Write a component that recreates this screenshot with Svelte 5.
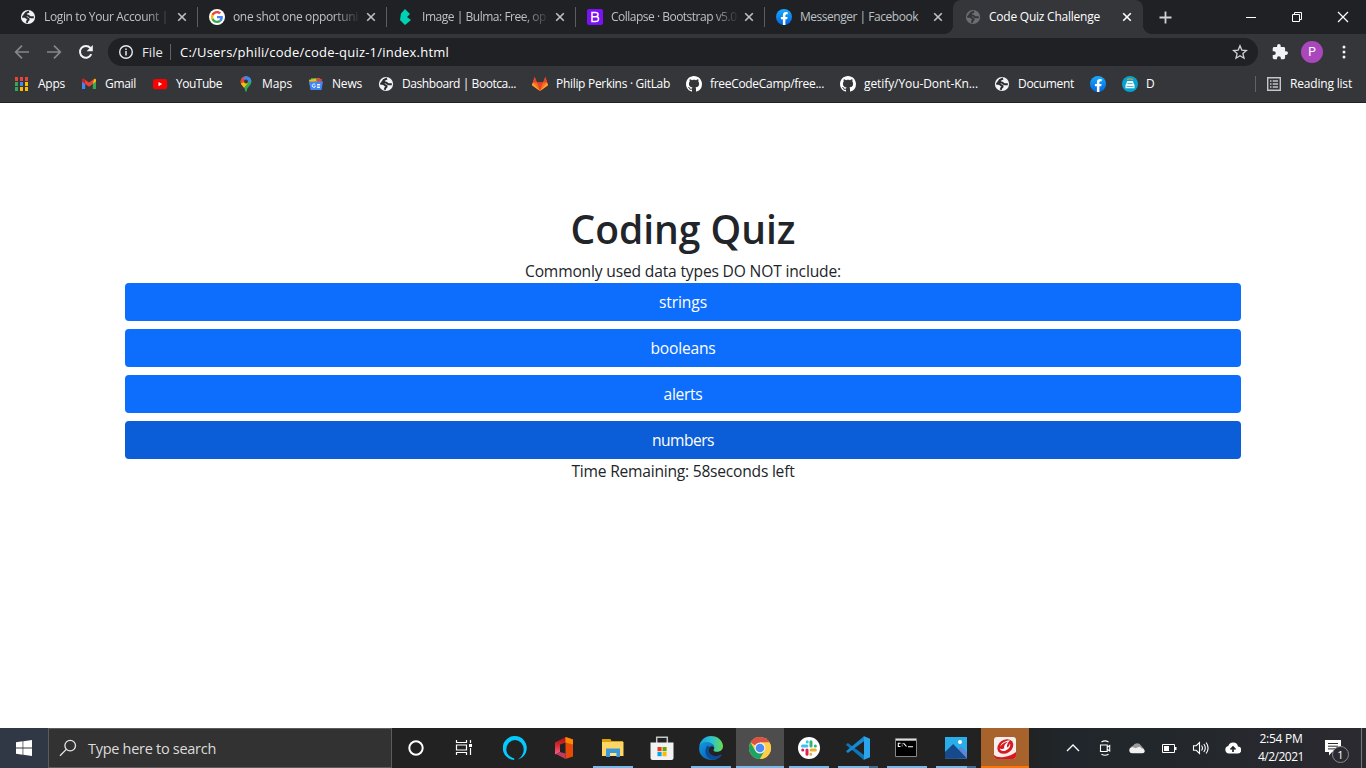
<script>
  const tabs = [
    { icon: 'globe', title: 'Login to Your Account |', w: 124 },
    { icon: 'google', title: 'one shot one opportuni', w: 125 },
    { icon: 'bulma', title: 'Image | Bulma: Free, op', w: 124 },
    { icon: 'bootstrap', title: 'Collapse · Bootstrap v5.0', w: 125.5 },
    { icon: 'facebook', title: 'Messenger | Facebook', w: 118 },
    { icon: 'globe', title: 'Code Quiz Challenge', w: 111, active: true }
  ];
  const bookmarks = [
    { icon: 'apps', label: 'Apps', w: 27 },
    { icon: 'gmail', label: 'Gmail', w: 31 },
    { icon: 'youtube', label: 'YouTube', w: 46 },
    { icon: 'maps', label: 'Maps', w: 30 },
    { icon: 'news', label: 'News', w: 30 },
    { icon: 'globe', label: 'Dashboard | Bootca...', w: 114 },
    { icon: 'gitlab', label: 'Philip Perkins · GitLab', w: 114 },
    { icon: 'github', label: 'freeCodeCamp/free...', w: 114 },
    { icon: 'github', label: 'getify/You-Dont-Kn...', w: 114 },
    { icon: 'globe', label: 'Document', w: 56 },
    { icon: 'facebook', label: '', w: 0 },
    { icon: 'car', label: 'D', w: 9 }
  ];
  const answers = [
    { label: 'strings', w: 48 },
    { label: 'booleans', w: 65 },
    { label: 'alerts', w: 39 },
    { label: 'numbers', w: 62, hover: true }
  ];
  const apps = [
    { icon: 'cortana' }, { icon: 'taskview' }, { icon: 'alexa' }, { icon: 'office' },
    { icon: 'explorer', run: true }, { icon: 'store' }, { icon: 'edge', run: true },
    { icon: 'chrome', run: true, focus: true }, { icon: 'slack', run: true },
    { icon: 'vscode', run: true, multi: true }, { icon: 'cmd', run: true },
    { icon: 'photos', run: true, multi: true }, { icon: 'trend', alert: true }
  ];

  // Tracks a line of text so that it fills the given width.
  function fit(node, w) {
    if (!w) return;
    node.style.letterSpacing = '0px';
    const natural = node.getBoundingClientRect().width;
    node.style.letterSpacing = (w - natural) / node.textContent.length + 'px';
  }
</script>

{#snippet cross(color)}
  <svg width="10" height="10" viewBox="0 0 10 10"><path d="M1.200 1.200l7.600 7.600M8.800 1.200L1.200 8.800" stroke={color} stroke-width="1.600" /></svg>
{/snippet}

{#snippet fav(name, dim)}
  {#if name === 'globe'}
    <svg width="16" height="16" viewBox="0 0 16 16">
      <circle cx="8" cy="8" r="7.100" fill={dim ? '#6b6e72' : '#f1f3f4'} />
      <g fill="none" stroke={dim ? '#35363a' : '#2b2c2f'} stroke-width="2"><path d="M9 2.500L5.800 4.200q-.2 2.200 1.800 2.400c1.700 0 1.500 1.700 3.300 1.700h2.900" /><path d="M2.200 7.800h2.300c2 0 1.500 1.400 3.200 1.700 1.500.3.900 1.800-.2 2.100l-.8 2.200" /></g>
      <path d="M2.600 7.800Q3.200 4.600 6 3.200l1 4.300z" fill={dim ? '#35363a' : '#2b2c2f'} />
    </svg>
  {:else if name === 'google'}
    <svg width="16" height="16" viewBox="0 0 16 16">
      <circle cx="8" cy="8" r="8" fill="#fff" />
      <g transform="translate(1.900 1.900) scale(.254)">
        <path fill="#EA4335" d="M24 9.500c3.540 0 6.710 1.220 9.210 3.600l6.850-6.850C35.900 2.380 30.470 0 24 0 14.620 0 6.510 5.380 2.560 13.220l7.980 6.190C12.430 13.720 17.740 9.500 24 9.500z" />
        <path fill="#4285F4" d="M46.980 24.550c0-1.570-.15-3.090-.38-4.550H24v9.020h12.940c-.58 2.960-2.260 5.480-4.780 7.180l7.730 6c4.510-4.180 7.090-10.360 7.090-17.650z" />
        <path fill="#FBBC05" d="M10.530 28.590c-.48-1.450-.76-2.990-.76-4.590s.27-3.140.76-4.590l-7.980-6.190C.92 16.460 0 20.120 0 24c0 3.880.92 7.540 2.560 10.780l7.970-6.190z" />
        <path fill="#34A853" d="M24 48c6.480 0 11.930-2.130 15.890-5.810l-7.730-6c-2.150 1.450-4.920 2.300-8.160 2.300-6.260 0-11.570-4.220-13.470-9.910l-7.980 6.190C6.510 42.620 14.620 48 24 48z" />
      </g>
    </svg>
  {:else if name === 'bulma'}
    <svg width="16" height="16" viewBox="0 0 16 16"><path d="M2 11L3 4.500 7 0l5 5-3 3 4 3-6 5z" fill="#00d1b2" /></svg>
  {:else if name === 'bootstrap'}
    <svg width="16" height="16" viewBox="0 0 16 16">
      <rect width="16" height="16" rx="2" fill="#7a12f5" />
      <path d="M5 3.500h3.600c3.200 0 3.100 3.600.5 4.100 3.500.5 3.100 4.900-.5 4.900H5zM5 7.700h4" fill="none" stroke="#fff" stroke-width="1.500" />
    </svg>
  {:else if name === 'facebook'}
    <svg width="16" height="16" viewBox="0 0 16 16">
      <defs><linearGradient id="fb" x2="0" y2="1"><stop stop-color="#18acfe" /><stop offset="1" stop-color="#0163e0" /></linearGradient></defs>
      <circle cx="8" cy="8" r="8" fill="url(#fb)" />
      <path d="M6.900 15.900v-5.600h-2V8h2V6.300c0-2 1.200-3.200 3.100-3.200.9 0 1.700.2 1.700.2v1.900h-1c-1 0-1.300.6-1.300 1.300V8h2.200l-.4 2.300H9.400v5.600z" fill="#fff" />
    </svg>
  {:else if name === 'apps'}
    <svg width="16" height="16" viewBox="0 0 16 16">
      {#each ['#ea4335', '#ea4335', '#ea4335', '#34a853', '#4285f4', '#fbbc05', '#34a853', '#fbbc05', '#fbbc05'] as c, i}
        <rect x={2 + (i % 3) * 5} y={1 + Math.floor(i / 3) * 5} width="3" height="4" fill={c} />
      {/each}
    </svg>
  {:else if name === 'gmail'}
    <svg width="16" height="16" viewBox="0 0 16 16">
      <path d="M1 4v9h3.200V6z" fill="#4285f4" /><path d="M15 4v9h-3.200V6z" fill="#34a853" />
      <path d="M11.800 4.800L13.200 3c1-.8 1.800 0 1.800.9v1.500l-3.200 2.600z" fill="#fbbc04" />
      <path d="M1 5.400V3.900C1 3 2 2.200 2.900 2.900L8 6.600l5.100-3.700-1.300 5.100L8 10.800z" fill="#ea4335" />
      <path d="M1 5.400V4c0-1 .9-1.500 1.600-1.200L4.200 4v4z" fill="#c5221f" />
    </svg>
  {:else if name === 'youtube'}
    <svg width="16" height="16" viewBox="0 0 16 16"><rect x="1" y="3" width="14.200" height="10.300" rx="2.400" fill="#f00" /><path d="M6.500 6v4.200L10.200 8z" fill="#fff" /></svg>
  {:else if name === 'maps'}
    <svg width="16" height="16" viewBox="0 0 16 16">
      <defs><clipPath id="pin"><path d="M8 .2a5.400 5.400 0 0 0-5.400 5.500C2.600 9.500 7 10.500 7.200 15q.8 1.400 1.600 0C9 10.500 13.400 9.500 13.400 5.700A5.400 5.400 0 0 0 8 .2z" /></clipPath></defs>
      <g clip-path="url(#pin)"><path d="M0 0h16v16H0z" fill="#34a853" /><path d="M0 0h9L8 6 3 12H0z" fill="#ea4335" /><path d="M7 0h9v5l-4 1-4-1-3-3z" fill="#4285f4" /><path d="M2 8l6-3 2 2-6 7z" fill="#fbbc04" /></g>
      <circle cx="8" cy="5.500" r="2" fill="#35363a" />
    </svg>
  {:else if name === 'news'}
    <svg width="16" height="16" viewBox="0 0 16 16">
      <path d="M3 2h9v8H3z" fill="#34a853" /><path d="M9 1.800l5 1.500-1 6H8z" fill="#ea4335" /><path d="M1 3.800l7-1 1 6-7 1z" fill="#fbbc04" />
      <path d="M1 5.500h14L13.500 14h-11z" fill="#4285f4" />
      <path d="M7.300 8.700a1.700 1.700 0 1 0 .2 1.500H6.200M9 8.500h3.200M9 10h2.800M9 11.500h3" stroke="#fff" fill="none" stroke-width=".9" />
    </svg>
  {:else if name === 'gitlab'}
    <svg width="16" height="16" viewBox="0 0 16 16">
      <path d="M8 15L0 9.200 2.600 1l2.300 5.500h6.200L13.400 1 16 9.200z" fill="#fc6d26" /><path d="M2.600 1l2.300 5.500H.9zM13.400 1l-2.300 5.500h4z" fill="#e24329" /><path d="M8 15L4.900 6.500h6.200z" fill="#e24329" /><path d="M.9 6.500L8 15 0 9.200zM15.100 6.500L8 15l8-5.800z" fill="#fca326" />
    </svg>
  {:else if name === 'github'}
    <svg width="16" height="16" viewBox="0 0 16 16"><path fill="#fff" d="M8 0C3.580 0 0 3.580 0 8c0 3.540 2.290 6.530 5.470 7.590.4.07.55-.17.55-.38 0-.19-.01-.82-.01-1.490-2.010.37-2.530-.49-2.690-.94-.09-.23-.48-.94-.82-1.130-.28-.15-.68-.52-.01-.53.63-.01 1.080.58 1.230.82.72 1.210 1.870.87 2.330.66.07-.52.28-.87.51-1.070-1.780-.2-3.640-.89-3.640-3.950 0-.87.31-1.590.82-2.150-.08-.2-.36-1.020.08-2.120 0 0 .67-.21 2.200.82.64-.18 1.320-.27 2-.27s1.360.09 2 .27c1.530-1.040 2.200-.82 2.200-.82.44 1.100.16 1.920.08 2.120.51.56.82 1.270.82 2.150 0 3.070-1.870 3.750-3.650 3.950.29.25.54.73.54 1.480 0 1.070-.01 1.930-.01 2.200 0 .21.15.46.55.38A8.010 8.010 0 0 0 16 8c0-4.420-3.580-8-8-8z" /></svg>
  {:else if name === 'car'}
    <svg width="16" height="16" viewBox="0 0 16 16"><circle cx="8" cy="8" r="8" fill="#04a3cf" /><path d="M5 3.400q3-1 6 0" stroke="#c9a545" stroke-width="1.100" fill="none" /><path d="M5 5h6l.8 3 .7.700v3.600h-9V8.700l.7-.7z" fill="#fff" /><path d="M5.500 7.600h5M4.500 10.400h7" stroke="#04a3cf" stroke-width=".8" /></svg>
  {/if}
{/snippet}

{#snippet app(name)}
  {#if name === 'cortana'}
    <svg width="24" height="24" viewBox="0 0 24 24"><circle cx="12" cy="12" r="6.700" fill="none" stroke="#fff" stroke-width="2" /></svg>
  {:else if name === 'taskview'}
    <svg width="24" height="24" viewBox="0 0 24 24" fill="none" stroke="#fff" stroke-width="1.200"><path d="M3.500 4v2.500h10V4M3.500 19v-2.500h10V19M3.500 9h10v5h-10zM17.500 4v3M17.500 12v7" /><path d="M16 8h3v3h-3z" fill="#fff" stroke="none" /></svg>
  {:else if name === 'alexa'}
    <svg width="24" height="24" viewBox="0 0 24 24"><path d="M11.200 24A12 12 0 1 1 14 23.800c3.500-1.300 6.700-5.500 6.700-10.300a8.700 9.500 0 1 0-17.400 0c0 4 3 8 7.900 8.700z" fill="#05caff" /></svg>
  {:else if name === 'office'}
    <svg width="24" height="24" viewBox="0 0 24 24">
      <defs><linearGradient id="off" x2="0" y2="1"><stop stop-color="#a80f12" /><stop offset=".5" stop-color="#d72c35" /><stop offset="1" stop-color="#ff6090" /></linearGradient></defs>
      <path d="M3 6.500L13.500 1v5.500L8 8.500V16l-5 2.500z" fill="url(#off)" /><path d="M13.500 1L21 3.500v17L13.500 23z" fill="#e64a08" /><path d="M13.500 1L21 3.500v5l-7.500-2z" fill="#ff8a00" /><path d="M4 18l4-2 5.500 1.500V23z" fill="#c33a60" />
    </svg>
  {:else if name === 'explorer'}
    <svg width="24" height="24" viewBox="0 0 24 24"><path d="M1 3h8.500l1 2H22V20H1z" fill="#dba106" /><path d="M1 6h21.500v14H1z" fill="#ffd663" /><path d="M5 12.500h14V21h-3.700v-4H9v4H5z" fill="#3d98d8" /><path d="M9 17h6.300v3H9z" fill="#ffe28f" /></svg>
  {:else if name === 'store'}
    <svg width="24" height="24" viewBox="0 0 24 24"><path d="M6.700 7V1.300h10.600V7" fill="none" stroke="#c6c6c6" stroke-width="1.500" /><path d="M.5 6.500h23V22q0 2-2 2h-19q-2 0-2-2z" fill="#f2f2f2" /><path d="M7.500 11H11.600v4.200H7.500z" fill="#f03a17" /><path d="M12.500 11h4.100v4.200h-4.100z" fill="#6ba500" /><path d="M7.500 16h4.100v4.200H7.500z" fill="#00a4ef" /><path d="M12.500 16h4.100v4.200h-4.100z" fill="#ffb900" /></svg>
  {:else if name === 'edge'}
    <svg width="24" height="24" viewBox="0 0 24 24">
      <defs><linearGradient id="eg"><stop stop-color="#169fda" /><stop offset=".5" stop-color="#2cc0d5" /><stop offset="1" stop-color="#68dc4c" /></linearGradient><linearGradient id="eb" x2="1" y2="1"><stop stop-color="#1398e0" /><stop offset="1" stop-color="#0a51a3" /></linearGradient></defs>
      <path d="M.2 11C.8 4.500 6 0 12 0c7 0 12 5 12 10.300 0 3.300-2.700 5.500-5.700 5.500-2.700 0-4.200-1-3.800-1.800 1.800-2 .5-5.800-3.400-6.200C6 7 1.500 8 .2 11z" fill="url(#eg)" />
      <path d="M.2 11.800C.7 8.300 4 5.900 7.700 5.900c4.300 0 7.500 2.500 7.600 5.900-.8-1.600-3-2.100-4.500-.8-2.700 2.500-1.500 8.500 5.200 9.200 2.500.2 4.600-.7 5.800-1.400.7-.4 1 .2.600.7C19.700 23 16 24.200 12.200 24 5 23.700-.5 18.500.2 11.800z" fill="url(#eb)" />
      <path d="M8.500 9.500c-3.700 4.500-2.500 11.500 3.300 13.800 3.500 1.200 8-.1 10.300-4.200-2.600 1.300-5.400 1.500-7.600.6-4.500-1.700-6-5.400-3.700-8.700z" fill="#0c4a96" />
    </svg>
  {:else if name === 'chrome'}
    <svg width="24" height="24" viewBox="0 0 24 24">
      <circle cx="12" cy="12" r="11" fill="#ffcd46" /><path d="M12 12L2.470 6.500A11 11 0 0 1 21.530 6.500H12z" fill="#dd5144" /><path d="M2.470 6.500A11 11 0 0 0 12 23l4.800-8.300L12 12 7.200 14.600z" fill="#1da462" /><path d="M12 6.500h9.530A11 11 0 0 1 12 23l4.800-8.300z" fill="#ffcd46" />
      <circle cx="12" cy="12" r="5.500" fill="#f1f1f1" /><circle cx="12" cy="12" r="4.300" fill="#4c8bf5" />
    </svg>
  {:else if name === 'slack'}
    <svg width="24" height="24" viewBox="0 0 24 24"><circle cx="12" cy="12" r="11" fill="#fff" />
      <g stroke-width="3" stroke-linecap="round"><path d="M5.500 10h4.400M10.200 5.700v.2" stroke="#36c5f0" /><path d="M14 5.700v4.200M18.300 10h.1" stroke="#2eb67d" /><path d="M14 14h4.400M13.800 18.300v-.1" stroke="#ecb22e" /><path d="M10 14v4.300M5.700 14h.1" stroke="#e01e5a" /></g>
    </svg>
  {:else if name === 'vscode'}
    <svg width="24" height="24" viewBox="0 0 24 24"><path d="M.3 8.300l1.600-1.400 16.100 12v5L.5 9.300z" fill="#0a76bd" /><path d="M.3 15.700l1.600 1.400L18 5.200V.2L.5 14.700z" fill="#168bd2" /><path d="M17.500 0L24 2.800v18.400L17.500 24q.5-.5.500-1.500v-21q0-1-.5-1.500z" fill="#2ba4ec" /></svg>
  {:else if name === 'cmd'}
    <svg width="24" height="24" viewBox="0 0 24 24"><path d="M.500 2.500h21v18h-21z" fill="#000" stroke="#888" /><path d="M1 3h20v1.700H1z" fill="#ddd" /><path d="M5.500 7.200H3.300v3.300h2.200M7.200 7.500v.8M7.200 9.500v.8M8.500 7.200l3 3.300M13 10.800h5" stroke="#fff" fill="none" stroke-width="1.100" /></svg>
  {:else if name === 'photos'}
    <svg width="24" height="24" viewBox="0 0 24 24"><path d="M1 1h22v21.500H1z" fill="#2aaeea" /><path d="M14 14l3-3.500 6 6v6H14z" fill="#5e86d6" /><path d="M1 16l8.200-8L23 22.500H1z" fill="#174a8c" /><circle cx="16" cy="6" r="2" fill="#fff" /></svg>
  {:else if name === 'trend'}
    <svg width="24" height="24" viewBox="0 0 24 24"><rect x="1" y="1" width="22" height="22" rx="3" fill="#f4efec" /><path d="M1 19q3 3 10 2 7-1 12-5v4q0 3-3 3H4q-3 0-3-3z" fill="#d71920" /><ellipse cx="12.300" cy="10.500" rx="8.500" ry="6.700" transform="rotate(-35 12.300 10.500)" fill="#d71920" /><path d="M17 4.200c-5 .2-9.800 3.600-9.600 6.600 1-2.700 4.500-4.700 7.600-5.100-2.800 1.600-4.500 4.400-3.600 6.600-2 1-4.200.8-4.700-.4.2 2.700 3 3.800 6 2.500 3.300-1.500 5.300-4.500 4.300-7-.5 2-1.500 3.300-3 4.200-.4-2.500.8-5.300 3-7.400z" fill="#fff" /></svg>
  {/if}
{/snippet}

<div class="screen">
  <header class="tabstrip">
    {#each tabs as t, i}
      <div class="tab" class:active={t.active} class:last={i === 4}>
        <span class="fav">{@render fav(t.icon, t.active)}</span>
        <span class="title" class:fade={i < 4}><span use:fit={t.w}>{t.title}</span></span>
        <span class="close">{@render cross(t.active ? '#fff' : '#bdc1c6')}</span>
      </div>
    {/each}
    <svg class="plus" width="13" height="13" viewBox="0 0 13 13"><path d="M6.500.5v12M.5 6.500h12" stroke="#d0d2d5" stroke-width="1.800" /></svg>
    <div class="controls">
      <svg width="12" height="12" viewBox="0 0 12 12"><path d="M1 6.500h10" stroke="#fff" /></svg>
      <svg width="12" height="12" viewBox="0 0 12 12" fill="none" stroke="#fff"><path d="M1.500 3.500h7v7h-7zM3.500 3.500v-2h7v7h-2" /></svg>
      <svg width="12" height="12" viewBox="0 0 12 12"><path d="M1 1l10 10M11 1L1 11" stroke="#fff" stroke-width="1.200" /></svg>
    </div>
  </header>

  <div class="toolbar">
    <svg width="16" height="16" viewBox="0 0 16 16" fill="none" stroke="#85878a" stroke-width="1.700"><path d="M15 8H2M8 1.700L1.700 8 8 14.300" /></svg>
    <svg width="16" height="16" viewBox="0 0 16 16" fill="none" stroke="#85878a" stroke-width="1.700"><path d="M1 8h13M8 1.700L14.300 8 8 14.300" /></svg>
    <svg width="16" height="16" viewBox="0 0 16 16"><path d="M13.300 10.200A5.900 5.900 0 1 1 12.400 4" fill="none" stroke="#f1f3f4" stroke-width="2" /><path d="M14.800 1v6.200H8.600z" fill="#f1f3f4" /></svg>
    <div class="omnibox">
      <svg width="16" height="16" viewBox="0 0 16 16"><circle cx="8" cy="8" r="6.300" fill="none" stroke="#e8eaed" stroke-width="1.400" /><path d="M8 7.100v4.300M8 4.500v1.500" stroke="#e8eaed" stroke-width="1.500" /></svg>
      <span class="file"><span use:fit={21}>File</span></span>
      <span class="url"><span use:fit={269}>C:/Users/phili/code/code-quiz-1/index.html</span></span>
      <svg class="star" width="16" height="16" viewBox="0 0 16 16"><path d="M8 1.800l1.800 4.300 4.700.4-3.600 3.100 1.100 4.600L8 11.700l-4 2.500 1.100-4.600-3.600-3.100 4.700-.4z" fill="none" stroke="#d0d2d5" stroke-width="1.300" /></svg>
    </div>
    <svg class="puzzle" width="16" height="16" viewBox="1 1 22 22"><path fill="#f1f3f4" d="M20.500 11H19V7c0-1.100-.9-2-2-2h-4V3.500a2.500 2.500 0 0 0-5 0V5H4c-1.100 0-2 .9-2 2v3.800h1.500a2.700 2.700 0 0 1 0 5.400H2V20c0 1.100.9 2 2 2h3.800v-1.500a2.700 2.700 0 0 1 5.400 0V22H17c1.100 0 2-.9 2-2v-4h1.500a2.500 2.500 0 0 0 0-5z" /></svg>
    <span class="avatar">P</span>
    <svg class="dots" width="4" height="16" viewBox="0 0 4 16" fill="#f1f3f4"><circle cx="2" cy="3" r="1.500" /><circle cx="2" cy="8" r="1.500" /><circle cx="2" cy="13" r="1.500" /></svg>
  </div>

  <nav class="bookmarks">
    {#each bookmarks as b}
      <span class="bookmark">
        {@render fav(b.icon)}
        {#if b.label}<span class="label" style:width="{b.w}px"><span use:fit={b.w}>{b.label}</span></span>{/if}
      </span>
    {/each}
    <span class="reading">
      <svg width="16" height="16" viewBox="0 0 16 16"><path d="M1.700 1.700h12.600v12.600H1.700z" fill="none" stroke="#c4c6c9" stroke-width="1.400" /><path d="M4 5h1.500M4 8h1.500M4 11h1.500M6.700 5H12M6.700 8H12M6.700 11H12" stroke="#c4c6c9" stroke-width="1.300" /></svg>
      <span class="label"><span use:fit={62}>Reading list</span></span>
    </span>
  </nav>

  <main>
    <h1><span use:fit={225}>Coding Quiz</span></h1>
    <p><span use:fit={316}>Commonly used data types DO NOT include:</span></p>
    <div class="answers">
      {#each answers as a}
        <button class:hover={a.hover}><span use:fit={a.w}>{a.label}</span></button>
      {/each}
    </div>
    <p><span use:fit={223}>Time Remaining: 58seconds left</span></p>
  </main>

  <footer class="taskbar">
    <div class="start"><svg width="16" height="16" viewBox="0 0 16 16" fill="#fff"><path d="M0 2.200l6.600-.9v6.300H0zM7.300 1.200L16 0v7.600H7.300zM0 8.400h6.600v6.300L0 13.800zM7.300 8.400H16V16l-8.700-1.200z" /></svg></div>
    <div class="search">
      <svg width="18" height="18" viewBox="0 0 18 18" fill="none" stroke="#e6e6e6" stroke-width="1.300"><circle cx="11.200" cy="6.600" r="5.300" /><path d="M7.300 10.400L1 16.800" /></svg>
      <span use:fit={128}>Type here to search</span>
    </div>
    <div class="apps">
      {#each apps as a}
        <div class="app" class:run={a.run} class:focus={a.focus} class:multi={a.multi} class:alert={a.alert}>{@render app(a.icon)}</div>
      {/each}
    </div>
    <div class="tray">
      <svg width="16" height="16" viewBox="0 0 16 16"><path d="M2 11l6-6 6 6" fill="none" stroke="#fff" stroke-width="1.300" /></svg>
      <svg width="16" height="16" viewBox="0 0 16 16" fill="none" stroke="#fff" stroke-width="1.100"><path d="M3.500 5h6.700v6.500H3.500zM10.200 7.300L12.700 5.500v5.500l-2.500-1.700M4.500 2q3.500-2.200 7 0M4.500 14.300q3.500 2 7 0" /></svg>
      <svg width="16" height="16" viewBox="0 0 16 16"><path d="M2 9.500A3 3 0 0 1 4 5.700a4.500 4.500 0 0 1 8-.1L15 9z" fill="#9b9c9e" /><path d="M3.200 13.200a3 3 0 0 1 .2-6q1.700 0 3 1l4-1.500q1.500.5 2.200 1.700c3.500-.2 4.400 4.200 1 4.800z" fill="#f1f1f1" /></svg>
      <svg width="16" height="16" viewBox="0 0 16 16"><path d="M1.500 4.500h12v8h-12z" fill="none" stroke="#fff" /><path d="M3 6h5v5H3zM14 7h1.500v3H14z" fill="#fff" /></svg>
      <svg width="18" height="16" viewBox="0 0 18 16" fill="none" stroke="#fff" stroke-width="1.100"><path d="M1.500 5.700h2.700L7.500 2.500v11L4.200 10.300H1.500z" /><path d="M9.500 5.500q2 2.500 0 5M11.800 4q3 4 0 8M14.100 2.500q4 5.500 0 11" /></svg>
      <svg width="16" height="16" viewBox="0 0 16 16"><path d="M4 13.500A3.800 3.800 0 0 1 3.300 6 5 5 0 0 1 13 6.500a3.500 3.500 0 0 1-.5 7z" fill="#fff" /><path d="M8 12V8M5.500 9.500L8 7l2.500 2.500" stroke="#22272b" stroke-width="1.700" fill="none" /></svg>
    </div>
    <div class="clock"><span><span use:fit={43}>2:54 PM</span></span><span><span use:fit={46}>4/2/2021</span></span></div>
    <div class="notice">
      <svg width="18" height="18" viewBox="0 0 18 18"><path d="M1 1h16v12H8l-3 3.500V13H1z" fill="#fff" /><path d="M4 4.500h10M4 7.200h10M4 9.900h7" stroke="#2b2b30" /></svg>
      <span class="count">1</span>
    </div>
  </footer>
</div>

<style>
  :global(body) { overflow: hidden; }
  .screen { width: 1366px; height: 768px; display: flex; flex-direction: column; background: #fff; color: #fff; font-family: "Open Sans", "Noto Sans", sans-serif; font-size: 12px; white-space: nowrap; }
  .screen * { box-sizing: border-box; }
  svg { display: block; flex: none; }

  .tabstrip { height: 34px; flex: none; display: flex; align-items: center; background: #202124; padding-left: 8px; }
  .tab { width: 189px; height: 34px; display: flex; align-items: center; padding-left: 12px; position: relative; color: #bdc1c6; }
  .tab::after { content: ""; position: absolute; right: -1px; top: 7px; width: 1px; height: 20px; background: #5b5d60; }
  .tab.last::after { display: none; }
  .tab.active { color: #fff; background: #35363a; width: 190px; border-radius: 8px 8px 0 0; }
  .tab.active::before, .tab.active::after { content: ""; position: absolute; top: auto; bottom: 0; width: 8px; height: 8px; }
  .tab.active::before { left: -8px; background: radial-gradient(circle at 0 0, transparent 7.500px, #35363a 8px); }
  .tab.active::after { right: -8px; background: radial-gradient(circle at 100% 0, transparent 7.500px, #35363a 8px); }
  .title { width: 126px; margin-left: 8px; overflow: hidden; line-height: 18px; }
  .title.fade { -webkit-mask-image: linear-gradient(90deg, #000 80%, transparent 102%); mask-image: linear-gradient(90deg, #000 80%, transparent 102%); }
  .close { margin-left: 7px; }
  .plus { margin-left: 16px; }
  .controls { margin-left: auto; display: flex; gap: 34px; padding-right: 17px; height: 28px; align-items: center; }

  .toolbar { height: 36px; flex: none; display: flex; align-items: center; background: #35363a; padding: 0 20px 0 14px; }
  .toolbar > svg + svg { margin-left: 16px; }
  .omnibox { width: 1150px; height: 28px; margin-left: 14px; border-radius: 14px; background: #202124; display: flex; align-items: center; padding: 0 10px; font-size: 13px; line-height: 18px; }
  .file { margin-left: 8px; width: 29px; color: #e8eaed; border-right: 1px solid #5f6368; height: 16px; line-height: 17px; }
  .url { margin-left: 9px; }
  .star { margin-left: auto; }
  .puzzle { margin-left: 14px; }
  .avatar { margin-left: 13px; width: 22px; height: 22px; border-radius: 50%; background: #ab47bc; font: 12px/22px Roboto, sans-serif; text-align: center; }
  .toolbar > .dots { margin-left: auto; }

  .bookmarks { height: 33px; flex: none; display: flex; align-items: center; gap: 16px; background: #35363a; border-bottom: 1px solid #202124; padding: 0 14px 4px 14px; }
  .bookmark { display: flex; align-items: center; gap: 8px; }
  .bookmark:first-child { margin-left: -1px; gap: 9px; }
  .label { line-height: 16px; }
  .reading { margin-left: auto; display: flex; align-items: center; gap: 8px; padding-left: 10px; border-left: 1px solid #5f6368; height: 16px; }

  main { flex: 1; padding: 100px 125px 0; color: #212529; font-size: 15.600px; line-height: 24px; text-align: center; }
  h1 { margin: 0 0 8px; padding-top: 2px; font-size: 39px; line-height: 48px; font-weight: 600; height: 48px; }
  p { margin: 0; }
  .answers { display: flex; flex-direction: column; gap: 8px; }
  button { height: 38px; border: 0; border-radius: 4px; padding: 0; background: #0d6efd; color: #fff; font: inherit; }
  button.hover { background: #0b5ed7; }

  .taskbar { height: 40px; flex: none; display: flex; background: linear-gradient(90deg, #222 0, #222 75%, #20262b 78%, #22272b 85%, #2b2a30 100%); }
  .start { width: 48px; display: flex; align-items: center; justify-content: center; background: #2f3844; }
  .search { width: 344px; border: 1px solid #5c5c5c; background: #323232; display: flex; align-items: center; gap: 11px; padding-left: 10px; font-size: 14.500px; color: #dcdcdc; }
  .apps { display: flex; gap: 1.080px; }
  .app { width: 48px; height: 40px; display: flex; align-items: center; justify-content: center; position: relative; }
  .run::after, .alert::after { content: ""; position: absolute; left: 4px; right: 4px; bottom: 0; height: 2px; background: #76b9ed; }
  .app:nth-child(n + 3):nth-child(-n + 7) { left: 1px; }
  .focus { background: #4d4d4d; }
  .focus::after { left: 0; right: 0; }
  .multi::after { background: linear-gradient(90deg, #76b9ed 31px, #426c8d 31px); }
  .alert { background: #a8622c; }
  .alert::after { left: 0; right: 0; background: #ff7300; }
  .tray { margin-left: 36px; display: flex; align-items: center; gap: 16px; }
  .clock { margin-left: 8px; width: 64px; display: flex; flex-direction: column; align-items: center; font-size: 12px; line-height: 18px; padding-top: 2px; }
  .tray svg:nth-child(5) { margin: 0 -1px; }
  .notice { margin-left: 11px; position: relative; width: 38px; border-right: 1px solid #77777b; padding-top: 11px; }
  .count { position: absolute; left: 8px; top: 18px; width: 17px; height: 17px; border: 1px solid #8a8a8e; border-radius: 50%; background: #2b2a30; font-size: 11px; line-height: 15px; text-align: center; }
</style>
